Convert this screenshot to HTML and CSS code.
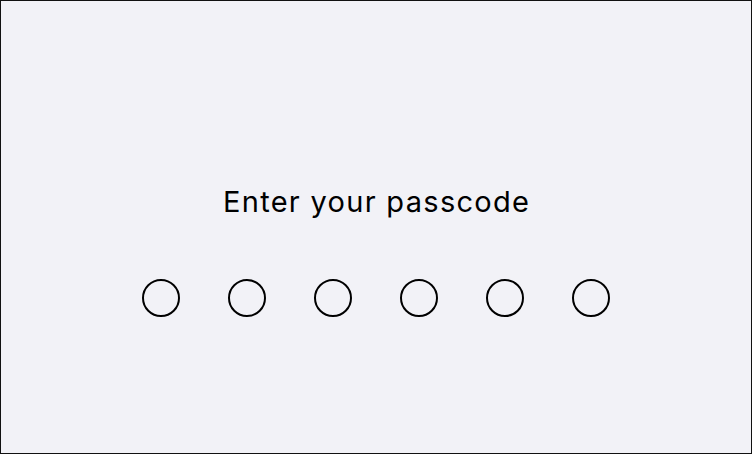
FILE: index.html
```html
<!DOCTYPE html>
<html>
<head>
<meta charset="utf-8">
<link rel="stylesheet" href="styles.css">
</head>
<body>
<main class="screen">
  <h1 class="title">Enter your passcode</h1>
  <div class="dots">
    <span class="dot"></span>
    <span class="dot"></span>
    <span class="dot"></span>
    <span class="dot"></span>
    <span class="dot"></span>
    <span class="dot"></span>
  </div>
</main>
</body>
</html>
```
FILE: styles.css
```css
html, body {
  margin: 0;
  padding: 0;
  background: #f2f2f7;
}
.screen {
  box-sizing: border-box;
  width: 752px;
  height: 454px;
  border: 1px solid #111;
  background: #f2f2f7;
  display: flex;
  flex-direction: column;
  align-items: center;
  padding-top: 180px;
  font-family: Inter, "Liberation Sans", Arial, sans-serif;
}
.title {
  margin: 0;
  font-size: 29px;
  font-weight: 400;
  letter-spacing: 1.3px;
  line-height: 42px;
  color: #000;
  padding-left: 1.3px;
}
.dots {
  display: flex;
  gap: 48px;
  margin-top: 56px;
}
.dot {
  box-sizing: border-box;
  width: 38px;
  height: 38px;
  border: 2px solid #000;
  border-radius: 50%;
}
```
